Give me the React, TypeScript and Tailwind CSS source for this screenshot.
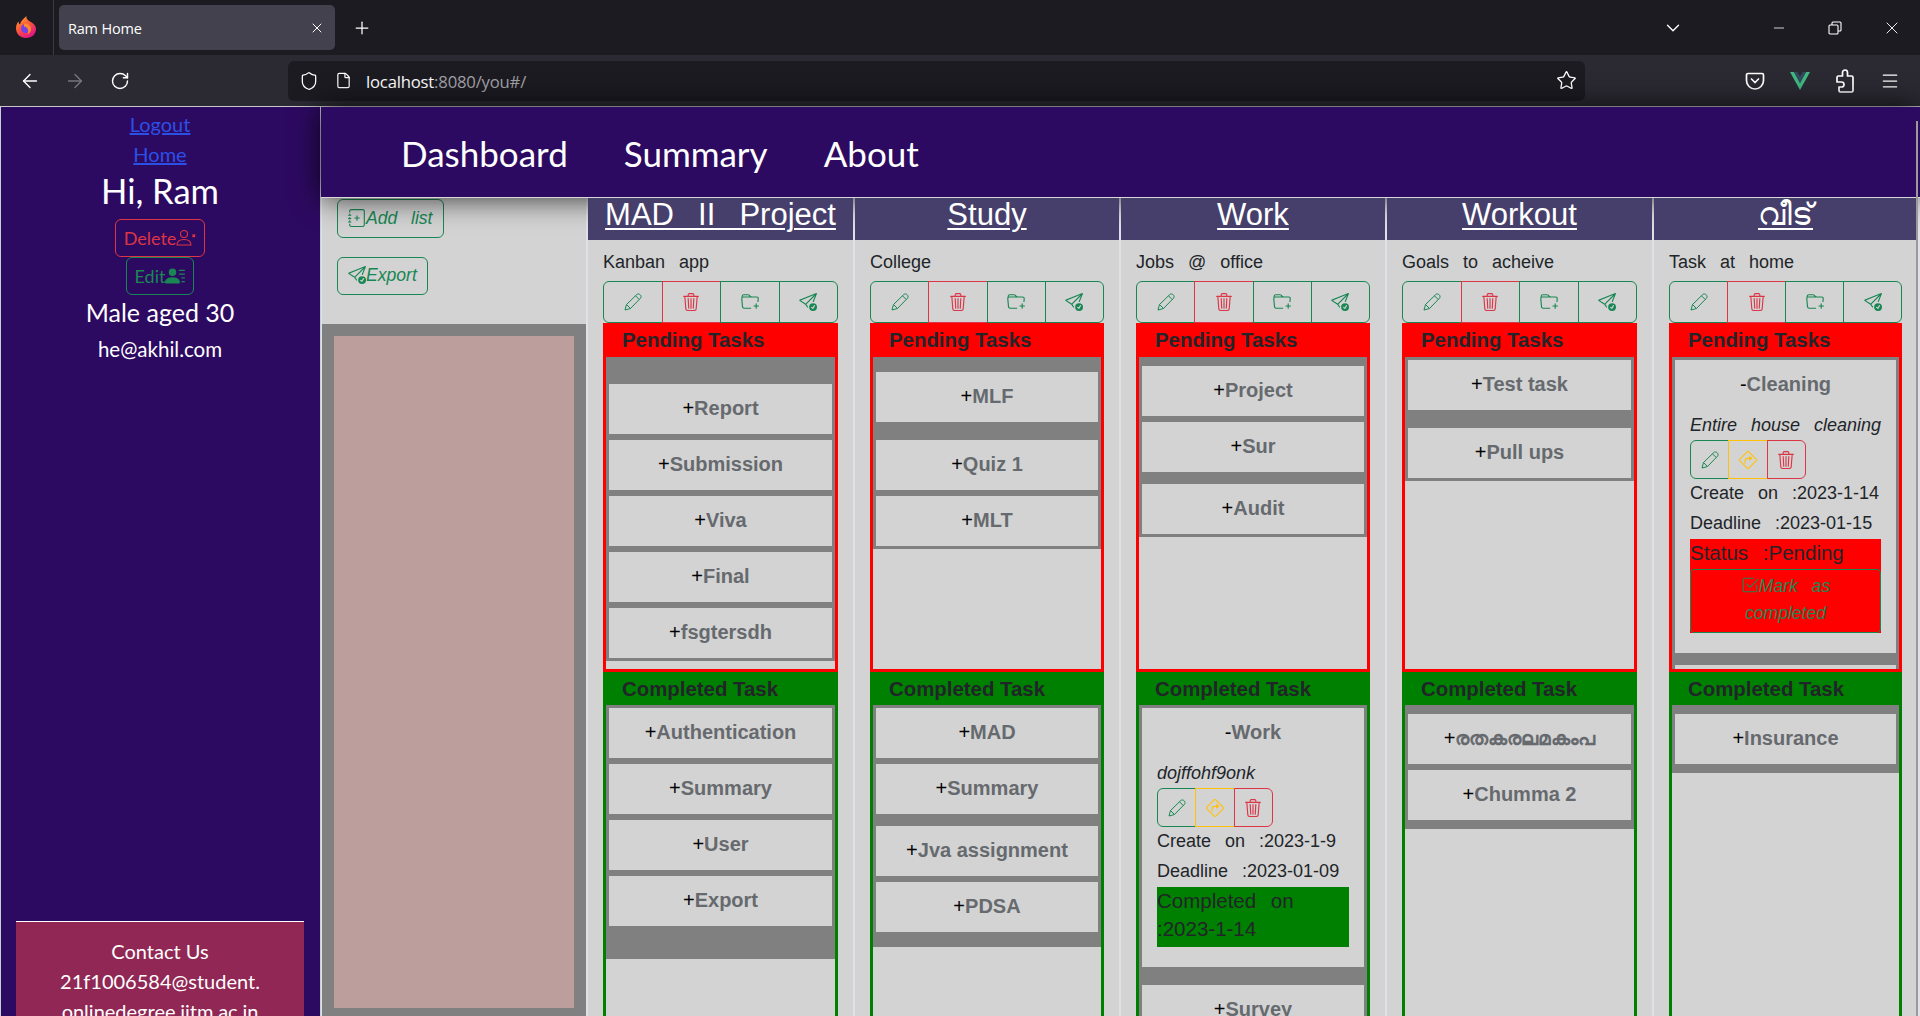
import { ArrowLeft, ArrowRight, ChevronDown, File, Menu, Minus, Plus, RotateCw, Shield, Star, X } from "lucide-react";
import {
  BsCheck2Square,
  BsFolderPlus,
  BsJournalPlus,
  BsPersonLinesFill,
  BsSendCheck,
  BsSignTurnRight,
  BsTrash3,
} from "react-icons/bs";

type Task = {
  name: string;
  top: string;
  detail?: { desc: string; created: string; deadline: string; status?: string; completed?: string };
};

type Section = { tasks: Task[]; bottom: string };

type Column = { title: string; sub: string; pending: Section; completed: Section; width: string };

const columns: Column[] = [
  {
    title: "MAD II Project",
    sub: "Kanban app",
    width: "w-[265px]",
    pending: {
      bottom: "pb-[3px]",
      tasks: [
        { name: "Report", top: "mt-[27px]" },
        { name: "Submission", top: "mt-[6px]" },
        { name: "Viva", top: "mt-[6px]" },
        { name: "Final", top: "mt-[6px]" },
        { name: "fsgtersdh", top: "mt-[6px]" },
      ],
    },
    completed: {
      bottom: "pb-[33px]",
      tasks: [
        { name: "Authentication", top: "mt-[3px]" },
        { name: "Summary", top: "mt-[6px]" },
        { name: "User", top: "mt-[6px]" },
        { name: "Export", top: "mt-[6px]" },
      ],
    },
  },
  {
    title: "Study",
    sub: "College",
    width: "w-[264px]",
    pending: {
      bottom: "pb-[3px]",
      tasks: [
        { name: "MLF", top: "mt-[15px]" },
        { name: "Quiz 1", top: "mt-[18px]" },
        { name: "MLT", top: "mt-[6px]" },
      ],
    },
    completed: {
      bottom: "pb-[15px]",
      tasks: [
        { name: "MAD", top: "mt-[3px]" },
        { name: "Summary", top: "mt-[6px]" },
        { name: "Jva assignment", top: "mt-[12px]" },
        { name: "PDSA", top: "mt-[6px]" },
      ],
    },
  },
  {
    title: "Work",
    sub: "Jobs @ office",
    width: "w-[264px]",
    pending: {
      bottom: "pb-[3px]",
      tasks: [
        { name: "Project", top: "mt-[9px]" },
        { name: "Sur", top: "mt-[6px]" },
        { name: "Audit", top: "mt-[12px]" },
      ],
    },
    completed: {
      bottom: "pb-[3px]",
      tasks: [
        {
          name: "Work",
          top: "mt-[3px]",
          detail: {
            desc: "dojffohf9onk",
            created: "2023-1-9",
            deadline: "2023-01-09",
            completed: "2023-1-14",
          },
        },
        { name: "Survey", top: "mt-[18px]" },
      ],
    },
  },
  {
    title: "Workout",
    sub: "Goals to acheive",
    width: "w-[265px]",
    pending: {
      bottom: "pb-[3px]",
      tasks: [
        { name: "Test task", top: "mt-[3px]" },
        { name: "Pull ups", top: "mt-[18px]" },
      ],
    },
    completed: {
      bottom: "pb-[9px]",
      tasks: [
        { name: "രതകരലമകംപ", top: "mt-[9px]" },
        { name: "Chumma 2", top: "mt-[6px]" },
      ],
    },
  },
  {
    title: "വീട്",
    sub: "Task at home",
    width: "w-[263px]",
    pending: {
      bottom: "pb-[3px]",
      tasks: [
        {
          name: "Cleaning",
          top: "mt-[3px]",
          detail: {
            desc: "Entire house cleaning",
            created: "2023-1-14",
            deadline: "2023-01-15",
            status: "Pending",
          },
        },
        // next card is scrolled out of the box, only its top edge shows
        { name: "", top: "mt-[12px]" },
      ],
    },
    completed: {
      bottom: "pb-[9px]",
      tasks: [{ name: "Insurance", top: "mt-[9px]" }],
    },
  },
];

function FirefoxLogo() {
  return (
    <svg className="-mt-[2px] -ml-[2px]" width="22" height="24" viewBox="0 0 22 24">
      <defs>
        <linearGradient id="ff-body" x1="0" y1="0" x2="0.6" y2="1">
          <stop offset="0" stopColor="#ffb02e" />
          <stop offset="0.5" stopColor="#ff5a36" />
          <stop offset="1" stopColor="#e31587" />
        </linearGradient>
      </defs>
      <path
        d="M11 23C5 23 1 18.500 1 13.500C1 10.500 2 8 3.500 6.500C3.500 8 4 9 5 9.500C5.500 6.500 8 4 11.500 1C11 4 13 5 15 6.500C18.500 8.500 21 10.500 21 14C21 19 17 23 11 23Z"
        fill="url(#ff-body)"
      />
      <circle cx="10.500" cy="13.500" r="4.500" fill="#7542e5" />
      <path d="M9 8.500C12.500 8 16 10 16 14C16 17 14 19 12 19.500C14 17.500 14 12 9 11.500Z" fill="#ff8a2e" />
    </svg>
  );
}

function PencilIcon() {
  return (
    <svg width="18" height="18" viewBox="0 0 18 18" fill="none" stroke="currentColor" strokeWidth="1" strokeLinejoin="round">
      <path d="M1 17L2.500 11.500L12.800 1.500C13.800 0.700 15.200 0.800 16.200 1.800C17.200 2.800 17.300 4.200 16.500 5.200L6.500 15.500Z" />
      <path d="M11.500 2.800L15.200 6.500M2.500 11.500L6.500 15.500" />
    </svg>
  );
}

function PersonXIcon() {
  return (
    <svg width="20" height="20" viewBox="0 0 20 20" fill="none" stroke="currentColor" strokeWidth="1.100">
      <circle cx="8" cy="6" r="3.500" />
      <path d="M1 17C1 13.500 4 11.500 8 11.500C12 11.500 15 13.500 15 17Z" />
      <path d="M16.500 6.500L19 9M19 6.500L16.500 9" strokeWidth="1.400" />
    </svg>
  );
}

function ExtensionIcon() {
  return (
    <svg className="ml-[25px]" width="20" height="24" viewBox="0 0 20 24" fill="none" stroke="white" strokeWidth="1.700" strokeLinejoin="round">
      <path d="M7.500 7V3.500A2.500 2.500 0 0 1 12.500 3.500V7H16.500A1.500 1.500 0 0 1 18 8.500V21.500A1.500 1.500 0 0 1 16.500 23H5.500A1.500 1.500 0 0 1 4 21.500V18H6.500A2.500 2.500 0 0 0 6.500 13H2V8.500A1.500 1.500 0 0 1 3.500 7Z" />
    </svg>
  );
}

function BrowserChrome() {
  return (
    <div className="font-['Open_Sans',sans-serif] text-white">
      <div className="flex h-[55px] items-center bg-[#1c1b22]">
        <div className="flex h-full w-[54px] items-center justify-center border-r border-[#3a3944]">
          <FirefoxLogo />
        </div>
        <div className="ml-[5px] flex h-[45px] w-[276px] items-center justify-between rounded-[5px] bg-[#42414d] pl-[9px] pr-[10px]">
          <span className="pt-[2px] text-[14.500px] tracking-[-0.2px]">Ram Home</span>
          <X size={16} strokeWidth={1.5} />
        </div>
        <Plus className="ml-[17px]" size={20} strokeWidth={1.500} />
        <ChevronDown className="ml-auto mr-[87px]" size={22} strokeWidth={1.500} />
        <Minus className="mr-[41px]" size={16} strokeWidth={1.200} />
        <svg className="mr-[40px]" width="14" height="14" viewBox="0 0 14 14" fill="none" stroke="white" strokeWidth="1.100">
          <rect x="1" y="4" width="9" height="9" rx="1" />
          <path d="M4 4V2a1 1 0 0 1 1-1h7a1 1 0 0 1 1 1v7a1 1 0 0 1-1 1h-2" />
        </svg>
        <X className="mr-[18px]" size={20} strokeWidth={1.100} />
      </div>
      <div className="flex h-[52px] items-center border-b border-[#c8c8c8] bg-[#2b2a33]">
        <ArrowLeft className="ml-[19px]" size={22} strokeWidth={1.500} />
        <ArrowRight className="ml-[23px] text-[#77767e]" size={22} strokeWidth={1.500} />
        <RotateCw className="ml-[24px]" size={20} strokeWidth={1.700} />
        <div className="ml-[158px] flex h-[40px] w-[1297px] items-center rounded-[6px] bg-[#1c1b22] pl-[11px] pr-[8px]">
          <Shield size={20} strokeWidth={1.500} />
          <File className="ml-[16px]" size={17} strokeWidth={1.700} />
          <span className="ml-[14px] pt-[3px] text-[16.700px] tracking-[-0.2px]">
            localhost<span className="text-[#a3a3a9]">:8080/you#/</span>
          </span>
          <Star className="ml-auto" size={21} strokeWidth={1.500} />
        </div>
        <svg className="ml-[160px]" width="20" height="20" viewBox="0 0 20 20" fill="none" stroke="white" strokeWidth="1.700">
          <path d="M3 2.500H17A1.500 1.500 0 0 1 18.500 4V9.500A8.500 8.500 0 0 1 1.500 9.500V4A1.500 1.500 0 0 1 3 2.500Z" />
          <path d="M6.500 8L10 11.500L13.500 8" strokeLinecap="round" />
        </svg>
        <svg className="ml-[25px]" width="20" height="20" viewBox="0 0 20 20">
          <path d="M0 1H4L10 12L16 1H20L10 19Z" fill="#41b883" />
          <path d="M4 1H7.500L10 5.500L12.500 1H16L10 12Z" fill="#35495e" />
        </svg>
        <ExtensionIcon />
        <Menu className="ml-[25px]" size={20} strokeWidth={1.500} />
      </div>
    </div>
  );
}

function Sidebar() {
  return (
    <aside className="flex w-[321px] shrink-0 flex-col items-center overflow-hidden border-x border-[#c8cdd2] bg-[#2d0a61] pr-px font-['Lato',sans-serif] text-white">
      <a className="mt-[2px] shrink-0 text-[20px] leading-[30px] text-[#2a50e8] underline">Logout</a>
      <a className="shrink-0 text-[20px] leading-[30px] text-[#2a50e8] underline">Home</a>
      <h2 className="shrink-0 text-[34.500px] leading-[44px]">Hi, Ram</h2>
      <button className="mt-[6px] flex h-[38px] w-[90px] shrink-0 items-center justify-center rounded-[6px] border border-[#dc3545] text-[18px] text-[#dc3545]">
        Delete
        <PersonXIcon />
      </button>
      <button className="flex h-[38px] w-[68px] shrink-0 items-center justify-center rounded-[6px] border border-[#198754] text-[18px] text-[#198754]">
        Edit
        <BsPersonLinesFill size={20} />
      </button>
      <p className="shrink-0 text-[25px] leading-[34px]">Male aged 30</p>
      <p className="mt-[5px] shrink-0 text-[20.500px] leading-[30px]">he@akhil.com</p>
      <div className="mt-[557px] w-[288px] shrink-0 border-t border-white bg-[#902754] pt-[14px] text-center text-[20px] leading-[30px]">
        <p>Contact Us</p>
        <p>21f1006584@student.</p>
        <p>onlinedegree.iitm.ac.in</p>
      </div>
    </aside>
  );
}

function TaskTitle({ mark, name }: { mark: string; name: string }) {
  return (
    <div className="flex h-[50px] items-center justify-center pb-[2px] text-[20px] font-bold">
      <span className="font-normal text-black">{mark}</span>
      <span className="text-[#666a6e]">{name}</span>
    </div>
  );
}

function TaskCard({ task }: { task: Task }) {
  const { detail } = task;
  if (!task.name) {
    return <div className={`${task.top} mx-[3px] h-[50px] shrink-0 bg-[#d3d3d3]`} />;
  }
  if (!detail) {
    return (
      <div className={`${task.top} mx-[3px] shrink-0 bg-[#d3d3d3]`}>
        <TaskTitle mark="+" name={task.name} />
      </div>
    );
  }
  return (
    <div className={`${task.top} mx-[3px] shrink-0 bg-[#d3d3d3] pb-[20px]`}>
      <TaskTitle mark="-" name={task.name} />
      <div className="px-[15px] [word-spacing:0.5em]">
        <p className="flex h-[30px] items-center whitespace-nowrap italic">{detail.desc}</p>
        <div className="flex h-[39px] w-[116px]">
          <button className="flex flex-1 items-center justify-center rounded-l-[6px] border border-[#198754] text-[#198754]">
            <PencilIcon />
          </button>
          <button className="-ml-px flex flex-1 items-center justify-center border border-[#ffc107] text-[#ffc107]">
            <BsSignTurnRight size={18} />
          </button>
          <button className="-ml-px flex flex-1 items-center justify-center rounded-r-[6px] border border-[#dc3545] text-[#dc3545]">
            <BsTrash3 size={18} />
          </button>
        </div>
        <p className="h-[30px] whitespace-nowrap leading-[28px]">Create on :{detail.created}</p>
        <p className="h-[30px] whitespace-nowrap leading-[28px]">Deadline :{detail.deadline}</p>
        {detail.status ? (
          <div className="bg-[#ff0000] text-[20.500px]">
            <p className="h-[30px] leading-[27px]">Status :{detail.status}</p>
            <button className="h-[64px] w-full rounded-[4px] border border-[#198754] px-[30px] pb-[2px] text-[17.600px] leading-[27px] text-[#198754] italic [word-spacing:0.5em]">
              <BsCheck2Square className="inline align-[-2px]" size={18} />
              Mark as completed
            </button>
          </div>
        ) : (
          <div className="h-[60px] bg-[#008000] text-[20.500px] leading-[28px]">Completed on :{detail.completed}</div>
        )}
      </div>
    </div>
  );
}

function BoardColumn({ column }: { column: Column }) {
  return (
    <section className={`${column.width} shrink-0 overflow-hidden bg-[#d3d3d3]`}>
      <h3 className="h-[42px] bg-[#473f6b] text-center text-[31px] leading-[33px] text-white underline decoration-[1.500px] underline-offset-[3px] [word-spacing:0.5em]">
        {column.title}
      </h3>
      <div className="px-[15px] pt-[9px]">
        <p className="h-[32px] leading-[26px] [word-spacing:0.5em]">{column.sub}</p>
        <div className="flex h-[42px]">
          <button className="flex flex-1 items-center justify-center rounded-l-[6px] border border-[#198754] text-[#198754]">
            <PencilIcon />
          </button>
          <button className="-ml-px flex flex-1 items-center justify-center border border-[#dc3545] text-[#dc3545]">
            <BsTrash3 size={18} />
          </button>
          <button className="-ml-px flex flex-1 items-center justify-center border border-[#198754] text-[#198754]">
            <BsFolderPlus size={18} />
          </button>
          <button className="-ml-px flex flex-1 items-center justify-center rounded-r-[6px] border border-[#198754] text-[#198754]">
            <BsSendCheck size={18} />
          </button>
        </div>
        <div className="h-[349px] border-x-[3px] border-b-[3px] border-[#ff0000]">
          <h4 className="-mx-[3px] h-[34px] bg-[#ff0000] pl-[19px] text-[20.400px] leading-[35px] font-bold">Pending Tasks</h4>
          <div className="h-[312px] overflow-hidden">
            <div className={`${column.pending.bottom} flex flex-col bg-[#808080]`}>
              {column.pending.tasks.map((task) => (
                <TaskCard key={task.name} task={task} />
              ))}
            </div>
          </div>
        </div>
        <div className="h-[400px] border-x-[3px] border-[#008000]">
          <h4 className="-mx-[3px] h-[33px] bg-[#008000] pl-[19px] text-[20.400px] leading-[34px] font-bold">Completed Task</h4>
          <div className={`${column.completed.bottom} flex flex-col bg-[#808080]`}>
            {column.completed.tasks.map((task) => (
              <TaskCard key={task.name} task={task} />
            ))}
          </div>
        </div>
      </div>
    </section>
  );
}

export default function App() {
  return (
    <div className="flex h-[1016px] w-[1920px] flex-col overflow-hidden bg-[#dee2e6]">
      <BrowserChrome />
      <div className="flex min-h-0 flex-1">
        <Sidebar />
        <main className="relative flex min-w-0 flex-1 flex-col">
          <nav className="relative z-10 flex h-[91px] shrink-0 items-center gap-[56px] border-b border-[#d8d8d8] bg-[#2d0a61] pt-[3px] pl-[80px] font-['Lato',sans-serif] text-[35px] text-white shadow-[0_0_30px_rgba(0,0,0,0.8)]">
            <a>Dashboard</a>
            <a>Summary</a>
            <a>About</a>
          </nav>
          <div className="flex min-h-0 flex-1 gap-[2px] pl-px font-['Liberation_Sans','Noto_Sans',sans-serif] text-[18px] leading-[26px] text-[#212529]">
            <div className="flex w-[264px] shrink-0 flex-col bg-[#d3d3d3]">
              <div className="flex h-[126px] shrink-0 flex-col items-start pt-px pl-[15px] text-[17.600px] text-[#198754] italic">
                <button className="flex h-[39px] items-center rounded-[6px] border border-[#198754] px-[10px] pb-[2px] [word-spacing:0.5em]">
                  <BsJournalPlus size={18} />
                  Add list
                </button>
                <button className="mt-[19px] flex h-[38px] items-center rounded-[6px] border border-[#198754] px-[10px] pb-[2px]">
                  <BsSendCheck size={18} />
                  Export
                </button>
              </div>
              <div className="min-h-0 flex-1 bg-[#808080] px-[12px] pt-[12px] pb-[8px]">
                <div className="h-full bg-[#bc9f9c]" />
              </div>
            </div>
            <div className="relative z-20 flex gap-[2px]">
              {columns.map((column) => (
                <BoardColumn key={column.title} column={column} />
              ))}
            </div>
          </div>
          <div className="absolute top-[14px] right-[2px] bottom-0 z-30 w-[2px] bg-[#9a9a9a]" />
        </main>
      </div>
    </div>
  );
}
